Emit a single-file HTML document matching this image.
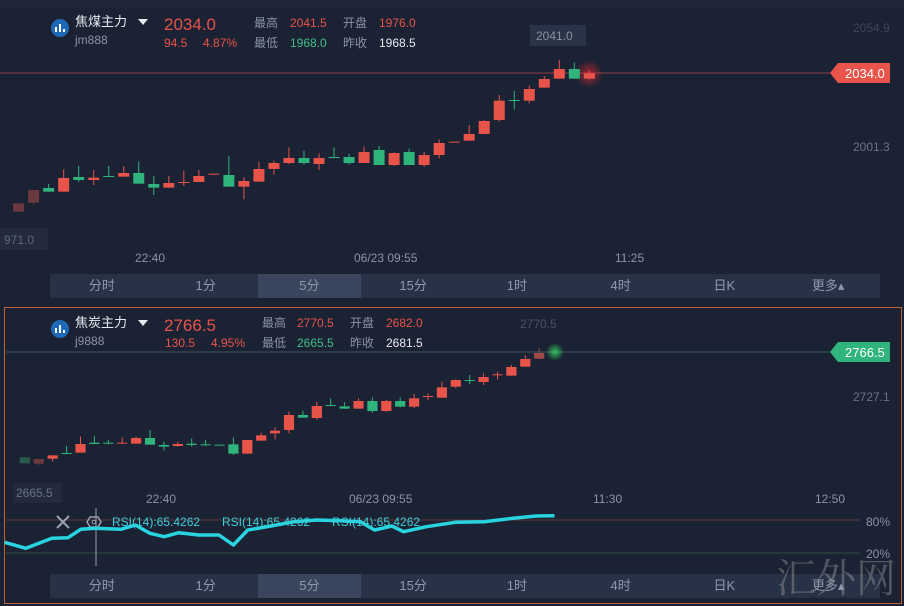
<!DOCTYPE html>
<html><head><meta charset="utf-8">
<style>
*{margin:0;padding:0;box-sizing:border-box}
body{width:904px;height:606px;background:#1b2233;position:relative;overflow:hidden;font-family:"Liberation Sans","Noto Sans CJK SC",sans-serif;color:#8a93a6}
.a{position:absolute;white-space:nowrap;line-height:1}
.w{color:#e8eaf0}.r{color:#e8534a}.g{color:#3dbf87}.gr{color:#8a93a6}
.tabs{position:absolute;left:50px;width:830px;height:24px;background:#283247;display:flex}
.tabs div{flex:1;text-align:center;line-height:24px;font-size:13px;color:#8f98ab}
.tabs div.on{background:#3a465e}
</style></head><body>
<svg class="a" style="left:0;top:0" width="904" height="606" id="s">
<rect x="0" y="0" width="904" height="8" fill="#1f2637"/>
<line x1="0" y1="73" x2="830" y2="73" stroke="#8a3e48" stroke-width="1"/>
<line x1="6" y1="352" x2="830" y2="352" stroke="#3b5556" stroke-width="1"/>
<line x1="6" y1="520" x2="860" y2="520" stroke="#5a3c3c" stroke-width="1"/>
<line x1="6" y1="553" x2="860" y2="553" stroke="#2f5045" stroke-width="1"/>
<rect x="4.5" y="307.5" width="897" height="296" fill="none" stroke="#b5643a" stroke-width="1"/>
<radialGradient id="rg"><stop offset="0" stop-color="#ff2a2a" stop-opacity=".6"/><stop offset="1" stop-color="#ff2a2a" stop-opacity="0"/></radialGradient>
<radialGradient id="gg"><stop offset="0" stop-color="#3cff6a" stop-opacity=".7"/><stop offset="1" stop-color="#3cff6a" stop-opacity="0"/></radialGradient>
<circle cx="589" cy="74" r="14" fill="url(#rg)"/>
<circle cx="555" cy="352" r="9" fill="url(#gg)"/>
<g id="c1"></g><g id="c2"></g>
<rect x="530" y="25" width="56" height="21" fill="#2a3448"/>
<polygon points="830,73 838,63 890,63 890,83 838,83" fill="#e8534a"/>
<polygon points="830,352 838,342 890,342 890,362 838,362" fill="#2fb47c"/>
<rect x="0" y="228" width="48" height="22" fill="#222a3c"/>
<rect x="14" y="483" width="48" height="20" fill="#222a3c"/>
<line x1="96" y1="508" x2="96" y2="566" stroke="#9aa2b2" stroke-width="1"/>
<path d="M57 516 L69 528 M69 516 L57 528" stroke="#9aa2b2" stroke-width="2"/>
<polygon points="90,517 98,517 101,522 98,527 90,527 87,522" fill="none" stroke="#9aa2b2" stroke-width="1.5"/>
<circle cx="94" cy="522" r="1.8" fill="none" stroke="#9aa2b2"/>
<polyline id="rsi" fill="none" stroke="#27d4e0" stroke-width="3.5" stroke-linejoin="round"/>
<circle cx="60" cy="28" r="9" fill="#1f68b8"/><path d="M56 32V27M60 32V24M64 32V29" stroke="#fff" stroke-width="2"/>
<polygon points="138,19 148,19 143,25" fill="#e8eaf0"/>
<circle cx="60" cy="329" r="9" fill="#1f68b8"/><path d="M56 333V328M60 333V325M64 333V330" stroke="#fff" stroke-width="2"/>
<polygon points="138,320 148,320 143,326" fill="#e8eaf0"/>
</svg>

<div class="a w" style="left:75px;top:15px;font-size:13px">焦煤主力</div>
<div class="a gr" style="left:75px;top:34px;font-size:12px">jm888</div>
<div class="a r" style="left:164px;top:16px;font-size:17px">2034.0</div>
<div class="a r" style="left:164px;top:37px;font-size:12px">94.5</div>
<div class="a r" style="left:203px;top:37px;font-size:12px">4.87%</div>
<div class="a gr" style="left:254px;top:17px;font-size:12px">最高</div>
<div class="a r" style="left:290px;top:17px;font-size:12px">2041.5</div>
<div class="a gr" style="left:343px;top:17px;font-size:12px">开盘</div>
<div class="a r" style="left:379px;top:17px;font-size:12px">1976.0</div>
<div class="a gr" style="left:254px;top:37px;font-size:12px">最低</div>
<div class="a g" style="left:290px;top:37px;font-size:12px">1968.0</div>
<div class="a gr" style="left:343px;top:37px;font-size:12px">昨收</div>
<div class="a w" style="left:379px;top:37px;font-size:12px">1968.5</div>

<div class="a" style="left:536px;top:30px;font-size:12px;color:#8890a2">2041.0</div>
<div class="a" style="left:853px;top:22px;font-size:12px;color:#3d4658">2054.9</div>
<div class="a" style="left:853px;top:141px;font-size:12px;color:#6a7386">2001.3</div>
<div class="a" style="left:845px;top:67px;font-size:13px;color:#fff">2034.0</div>
<div class="a" style="left:4px;top:234px;font-size:12px;color:#5e677a">971.0</div>
<div class="a" style="left:135px;top:252px;font-size:12px">22:40</div>
<div class="a" style="left:354px;top:252px;font-size:12px">06/23 09:55</div>
<div class="a" style="left:615px;top:252px;font-size:12px">11:25</div>
<div class="tabs" style="top:274px"><div>分时</div><div>1分</div><div class="on">5分</div><div>15分</div><div>1时</div><div>4时</div><div>日K</div><div>更多▴</div></div>

<div class="a w" style="left:75px;top:316px;font-size:13px">焦炭主力</div>
<div class="a gr" style="left:75px;top:335px;font-size:12px">j9888</div>
<div class="a r" style="left:164px;top:317px;font-size:17px">2766.5</div>
<div class="a r" style="left:165px;top:337px;font-size:12px">130.5</div>
<div class="a r" style="left:211px;top:337px;font-size:12px">4.95%</div>
<div class="a gr" style="left:262px;top:317px;font-size:12px">最高</div>
<div class="a r" style="left:297px;top:317px;font-size:12px">2770.5</div>
<div class="a gr" style="left:350px;top:317px;font-size:12px">开盘</div>
<div class="a r" style="left:386px;top:317px;font-size:12px">2682.0</div>
<div class="a gr" style="left:262px;top:337px;font-size:12px">最低</div>
<div class="a g" style="left:297px;top:337px;font-size:12px">2665.5</div>
<div class="a gr" style="left:350px;top:337px;font-size:12px">昨收</div>
<div class="a w" style="left:386px;top:337px;font-size:12px">2681.5</div>

<div class="a" style="left:520px;top:318px;font-size:12px;color:#4a5366">2770.5</div>
<div class="a" style="left:853px;top:391px;font-size:12px;color:#6a7386">2727.1</div>
<div class="a" style="left:845px;top:346px;font-size:13px;color:#fff">2766.5</div>
<div class="a" style="left:16px;top:487px;font-size:12px;color:#6a7386">2665.5</div>
<div class="a" style="left:146px;top:493px;font-size:12px">22:40</div>
<div class="a" style="left:349px;top:493px;font-size:12px">06/23 09:55</div>
<div class="a" style="left:593px;top:493px;font-size:12px">11:30</div>
<div class="a" style="left:815px;top:493px;font-size:12px">12:50</div>
<div class="a" style="left:866px;top:516px;font-size:12px">80%</div>
<div class="a" style="left:866px;top:548px;font-size:12px">20%</div>
<div class="a" style="left:112px;top:516px;font-size:12px;color:#3ccfd8">RSI(14):65.4262</div>
<div class="a" style="left:222px;top:516px;font-size:12px;color:#3ccfd8">RSI(14):65.4262</div>
<div class="a" style="left:332px;top:516px;font-size:12px;color:#3ccfd8">RSI(14):65.4262</div>
<div class="tabs" style="top:574px"><div>分时</div><div>1分</div><div class="on">5分</div><div>15分</div><div>1时</div><div>4时</div><div>日K</div><div>更多▴</div></div>
<div class="a" style="left:776px;top:556px;font-size:40px;color:rgba(150,150,150,.45);font-family:'Noto Serif CJK SC',serif">汇外网</div>

<script>
var NS="http://www.w3.org/2000/svg";
function mk(g,t,a){var e=document.createElementNS(NS,t);for(var k in a)e.setAttribute(k,a[k]);g.appendChild(e);}
var R="#e8534a",G="#2fb47c",FR="#6b3a40",FG="#2a5a4c";
var t1=[[FR,430,455,430,455],[FR,390,428,390,435],[G,384,395,372,395],[R,354,395,328,395],[G,351,360,318,366],[R,353,360,330,375],[G,348,351,318,351],[R,339,350,318,350],[G,339,371,305,371],[G,372,383,348,405],[R,369,383,348,383],[R,366,369,332,378],[R,348,366,330,366],[R,341,344,341,344],[G,345,380,288,380],[R,363,380,352,418],[R,327,365,305,365],[R,309,327,302,344],[R,294,309,262,312],[G,294,309,272,314],[R,294,312,280,330],[G,291,293,262,293],[G,291,309,282,314],[R,276,309,260,309],[G,270,315,258,315],[R,279,315,277,318],[G,276,315,266,315],[R,285,315,275,320],[R,249,285,238,295],[R,245,248,245,248],[R,222,242,195,242],[R,183,222,180,222],[R,122,180,105,185],[G,120,122,93,148],[R,87,122,77,130],[R,57,83,48,83],[R,27,56,0,56],[G,27,56,8,56],[R,40,56,32,58]];
var g1=document.getElementById("c1");
t1.forEach(function(c,i){var x=18.6+i*15.02,y=function(v){return v/3+60};
mk(g1,"line",{x1:x,x2:x,y1:y(c[3]),y2:y(c[4]),stroke:c[0],"stroke-width":1});
mk(g1,"rect",{x:x-5.5,y:y(c[1]),width:11,height:Math.max(1,(c[2]-c[1])/3),fill:c[0]});});
var t2=[[FG,352,370,352,370],[FR,357,371,357,375],[R,346,356,346,365],[G,339,341,318,341],[R,312,338,290,338],[G,308,312,288,312],[G,308,311,300,313],[R,308,311,292,311],[R,294,311,290,311],[G,294,314,270,314],[G,315,320,305,332],[R,312,318,305,320],[G,311,315,295,320],[G,313,316,300,318],[G,314,316,314,316],[G,313,341,292,345],[R,300,341,300,341],[R,286,302,278,302],[R,272,280,262,298],[R,225,270,215,280],[G,225,233,212,233],[R,198,234,185,240],[G,195,197,175,197],[G,199,206,187,206],[R,183,206,175,206],[G,183,213,172,218],[R,183,213,180,215],[G,183,200,172,202],[R,175,200,162,205],[R,168,170,160,180],[R,142,173,125,173],[R,120,140,118,145],[G,120,122,105,132],[R,111,126,100,135],[R,103,105,95,118],[R,81,107,75,107],[R,57,80,45,80],["#a04a48",39,56,25,56]];
var g2=document.getElementById("c2");
t2.forEach(function(c,i){var x=24.9+i*13.9,y=function(v){return v/3+340};
mk(g2,"line",{x1:x,x2:x,y1:y(c[3]),y2:y(c[4]),stroke:c[0],"stroke-width":1});
mk(g2,"rect",{x:x-5.1,y:y(c[1]),width:10.2,height:Math.max(1,(c[2]-c[1])/3),fill:c[0]});});
var p=[[8,157],[45,175],[90,145],[118,143],[140,118],[165,115],[210,118],[235,105],[260,130],[285,140],[310,128],[345,135],[380,135],[405,165],[430,120],[470,108],[510,95],[550,90],[590,92],[625,95],[650,120],[680,108],[700,125],[740,110],[790,97],[840,95],[890,85],[930,78],[962,77]];
document.getElementById("rsi").setAttribute("points",p.map(function(q){return (q[0]/1.735).toFixed(1)+","+(q[1]/3+490).toFixed(1)}).join(" "));
</script>
</body></html>
